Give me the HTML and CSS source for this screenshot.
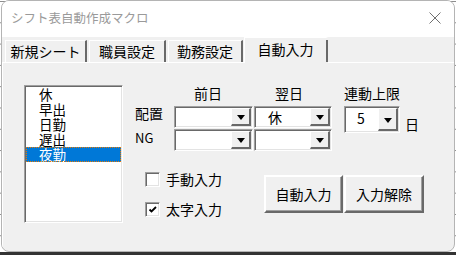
FILE: index.html
```html
<!DOCTYPE html>
<html lang="ja">
<head>
    <meta charset="UTF-8">
    <title>シフト表自動作成マクロ</title>
    <link rel="stylesheet" href="styles.css">
</head>
<body>

    <div class="window">
        <div class="titlebar">
            <span class="title">シフト表自動作成マクロ</span>
            <svg class="close" width="12" height="12" viewBox="0 0 12 12">
                <path d="M0.5 0.5 L11.5 11.5 M11.5 0.5 L0.5 11.5" stroke="#707070" stroke-width="1" fill="none"/>
            </svg>
        </div>

        <div class="tabs">
            <div class="tab tab-1">新規シート</div>
            <div class="tab tab-2">職員設定</div>
            <div class="tab tab-3">勤務設定</div>
            <div class="tab tab-active">自動入力</div>
        </div>

        <div class="page">
            <div class="listbox">
                <div class="list-item">休</div>
                <div class="list-item">早出</div>
                <div class="list-item">日勤</div>
                <div class="list-item">遅出</div>
                <div class="list-item selected">夜勤</div>
            </div>

            <div class="form">
                <div class="grid">
                    <span class="head head-prev">前日</span>
                    <span class="head head-next">翌日</span>
                    <span class="head head-limit">連動上限</span>

                    <span class="row-label label-haichi">配置</span>
                    <div class="combo prev-1"><span class="combo-text"></span><span class="drop"><i class="arrow"></i></span></div>
                    <div class="combo next-1"><span class="combo-text">休</span><span class="drop"><i class="arrow"></i></span></div>
                    <div class="combo combo-limit"><span class="combo-text">5</span><span class="drop"><i class="arrow"></i></span></div>
                    <span class="unit">日</span>

                    <span class="row-label label-ng">NG</span>
                    <div class="combo prev-2"><span class="combo-text"></span><span class="drop"><i class="arrow"></i></span></div>
                    <div class="combo next-2"><span class="combo-text"></span><span class="drop"><i class="arrow"></i></span></div>
                </div>

                <div class="lower">
                    <div class="checks">
                        <label class="check">
                            <span class="box"></span>
                            <span>手動入力</span>
                        </label>
                        <label class="check">
                            <span class="box">
                                <svg width="10" height="10" viewBox="0 0 10 10">
                                    <polyline points="1.5,4.5 3.5,6.5 8,2" stroke="#000" stroke-width="1.8" fill="none"/>
                                </svg>
                            </span>
                            <span>太字入力</span>
                        </label>
                    </div>
                    <div class="buttons">
                        <button class="cmd">自動入力</button>
                        <button class="cmd">入力解除</button>
                    </div>
                </div>
            </div>
        </div>
    </div>
    <div class="shade"></div>

</body>
</html>
```

FILE: styles.css
```css
* {
    box-sizing: border-box;
}
body {
    margin: 0;
    width: 456px;
    height: 255px;
    overflow: hidden;
    background-color: #fff;
    background-image: linear-gradient(#8c8c8c 1px, transparent 1px);
    background-size: 100% 21.3px;
    background-position: 0 1px;
    font-family: "Noto Sans CJK JP", sans-serif;
    font-size: 14px;
    color: #000;
}
.window {
    margin-left: 1px;
    width: 454px;
    height: 252px;
    border: 1px solid #b4b4b4;
    border-radius: 8px;
    background-color: #f0f0f0;
    overflow: hidden;
    display: flex;
    flex-direction: column;
}
.shade {
    height: 3px;
    background-color: #333;
}
.titlebar {
    height: 36px;
    flex: none;
    background-color: #fff;
    display: flex;
    align-items: center;
    justify-content: space-between;
    padding: 0 13px 2px 9px;
}
.title {
    font-size: 12.5px;
    color: #9a9a9a;
    line-height: 16px;
}

/* tab strip */
.tabs {
    height: 25px;
    flex: none;
    display: flex;
    align-items: flex-end;
    padding-left: 3px;
}
.tab {
    height: 22px;
    line-height: 20px;
    text-align: center;
    border-top: 1px solid #fff;
    border-left: 1px solid #fff;
    border-right: 2px solid #696969;
    margin-right: 2px;
}
.tab-1 { width: 82px; }
.tab-2 { width: 77px; }
.tab-3 { width: 75px; margin-right: 1px; }
.tab-active {
    width: 84px;
    height: 26px;
    line-height: 22px;
    margin-bottom: -1px;
    position: relative;
    z-index: 1;
    background-color: #f0f0f0;
    border-right-color: transparent;
}
.tab-active::after {
    content: "";
    position: absolute;
    right: -2px;
    top: 2px;
    bottom: 1px;
    width: 2px;
    background-color: #696969;
}

/* tab page */
.page {
    flex: 1;
    border-top: 1px solid #fff;
    border-left: 1px solid #fff;
    padding: 22px 0 0 21px;
    display: flex;
    align-items: flex-start;
}
.listbox {
    width: 99px;
    height: 138px;
    background-color: #fff;
    border: 1px solid;
    border-color: #a0a0a0 #fff #fff #a0a0a0;
    box-shadow: inset 1px 1px 0 #696969, inset -1px -1px 0 #e3e3e3;
    padding: 1px 1px 0 1px;
}
.list-item {
    height: 15px;
    line-height: 15px;
    font-size: 13.5px;
    padding-left: 13px;
}
.list-item.selected {
    background-color: #0078d7;
    color: #fff;
    outline: 1px dotted #e87a00;
    outline-offset: -1px;
}

.form {
    margin-left: 11px;
}
.grid {
    display: grid;
    grid-template-columns: 40px 79px 1px 78px 12px 56px 20px;
    grid-template-rows: 20px 22px 22px;
    row-gap: 1px;
}
.head {
    grid-row: 1;
    line-height: 16px;
    white-space: nowrap;
}
.head-prev { grid-column: 2; padding-left: 20px; }
.head-next { grid-column: 4; padding-left: 21px; }
.head-limit { grid-column: 6; }
.row-label {
    grid-column: 1;
    line-height: 16px;
    padding-left: 1px;
}
.label-haichi { grid-row: 2; margin-top: -1px; }
.label-ng {
    grid-row: 3;
    font-size: 13px;
    margin-top: 1px;
}
.prev-1 { grid-column: 2; grid-row: 2; }
.next-1 { grid-column: 4; grid-row: 2; }
.prev-2 { grid-column: 2; grid-row: 3; }
.next-2 { grid-column: 4; grid-row: 3; }

/* combo boxes */
.combo {
    display: flex;
    height: 22px;
    background-color: #fff;
    border: 1px solid;
    border-color: #a0a0a0 #fff #fff #a0a0a0;
    box-shadow: inset 1px 1px 0 #696969, inset -1px -1px 0 #e3e3e3;
    padding: 1px;
}
.combo-text {
    flex: 1;
    padding: 1px 0 0 12px;
    line-height: 16px;
}
.drop {
    width: 20px;
    background-color: #f0f0f0;
    border-top: 1px solid #fff;
    border-left: 1px solid #fff;
    border-right: 2px solid #696969;
    border-bottom: 2px solid #696969;
    display: flex;
    align-items: center;
    justify-content: center;
}
.arrow {
    width: 0;
    height: 0;
    border-left: 4px solid transparent;
    border-right: 4px solid transparent;
    border-top: 5px solid #000;
    margin-top: 2px;
}
.combo-limit {
    grid-column: 6;
    grid-row: 2 / span 2;
    align-self: start;
    height: 27px;
}
.combo-limit .combo-text {
    padding: 2px 0 0 11px;
}
.unit {
    grid-column: 7;
    grid-row: 2 / span 2;
    align-self: start;
    margin: 11px 0 0 5px;
    line-height: 14px;
}

/* checkboxes and buttons */
.lower {
    display: flex;
    align-items: flex-start;
    margin: 21px 0 0 11px;
}
.checks {
    width: 119px;
    display: flex;
    flex-direction: column;
    gap: 15px;
}
.check {
    display: flex;
    align-items: center;
    height: 15px;
    line-height: 15px;
}
.box {
    width: 15px;
    height: 15px;
    margin-right: 6px;
    background-color: #fff;
    border: 1px solid;
    border-color: #a0a0a0 #fff #fff #a0a0a0;
    box-shadow: inset 1px 1px 0 #696969, inset -1px -1px 0 #e3e3e3;
    padding: 1px;
    display: flex;
    align-items: center;
    justify-content: center;
}
.buttons {
    display: flex;
    gap: 1px;
    margin-top: 3px;
}
.cmd {
    width: 79px;
    height: 38px;
    padding: 0;
    font-family: inherit;
    font-size: 14px;
    color: #000;
    background-color: #f0f0f0;
    border: 2px solid;
    border-color: #fff #696969 #696969 #fff;
    box-shadow: inset -1px -1px 0 #a0a0a0;
    border-radius: 0;
}
.cmd + .cmd {
    width: 80px;
}
```
